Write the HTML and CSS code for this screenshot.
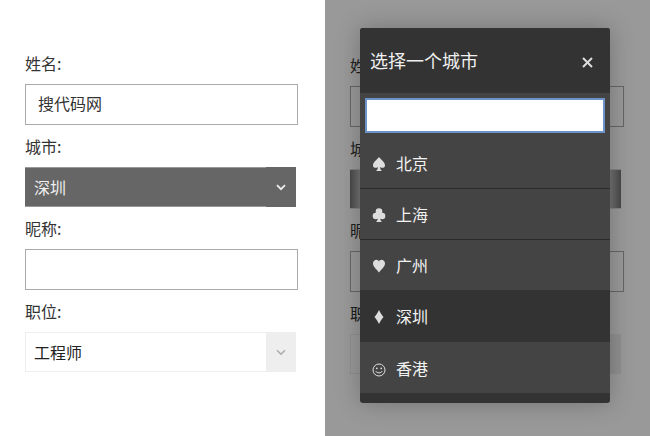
FILE: index.html
```html
<!DOCTYPE html>
<html lang="zh-CN">
<head>
    <meta charset="UTF-8">
    <meta name="viewport" content="width=device-width, initial-scale=1.0">
    <title>选择城市</title>
    <link rel="stylesheet" href="styles.css">
</head>
<body>
    <div class="page">
        <div class="pane">
            <form class="form">
                <label class="field-label">姓名:</label>
                <div class="text-box">搜代码网</div>
                <label class="field-label">城市:</label>
                <div class="select select-dark">
                    <span class="select-text">深圳</span>
                    <span class="select-arrow">
                        <svg width="10" height="7" viewBox="0 0 10 7"><path d="M1 1.2 5 5.2 9 1.2" fill="none" stroke="currentColor" stroke-width="1.8"/></svg>
                    </span>
                </div>
                <label class="field-label">昵称:</label>
                <div class="text-box"></div>
                <label class="field-label">职位:</label>
                <div class="select select-light">
                    <span class="select-text">工程师</span>
                    <span class="select-arrow">
                        <svg width="10" height="7" viewBox="0 0 10 7"><path d="M1 1.2 5 5.2 9 1.2" fill="none" stroke="currentColor" stroke-width="1.4"/></svg>
                    </span>
                </div>
            </form>
        </div>

        <div class="pane pane-open">
            <!-- same form behind the dialog, only its left edge shows -->
            <form class="form">
                <label class="field-label">姓</label>
                <div class="text-box"></div>
                <label class="field-label">城</label>
                <div class="select select-pressed"></div>
                <label class="field-label">昵</label>
                <div class="text-box"></div>
                <label class="field-label">职</label>
                <div class="select select-light">
                    <span class="select-text"></span>
                    <span class="select-arrow"></span>
                </div>
            </form>
            <div class="overlay"></div>
            <div class="dialog">
                <div class="dialog-head">
                    <span class="dialog-title">选择一个城市</span>
                    <span class="dialog-close">
                        <svg width="11" height="11" viewBox="0 0 11 11"><path d="M1 1 10 10M10 1 1 10" fill="none" stroke="currentColor" stroke-width="2"/></svg>
                    </span>
                </div>
                <div class="dialog-body">
                    <div class="search-wrap"><input class="search" type="text"></div>
                    <ul class="city-list">
                        <li class="city">
                            <svg class="city-icon" width="14" height="16" viewBox="0 0 14 16"><path d="M7 1C9 4 13 6 13 9.5 13 12 10 12.5 8 11 8.2 13 8.8 14.3 10 15H4C5.2 14.3 5.8 13 6 11 4 12.5 1 12 1 9.5 1 6 5 4 7 1Z" fill="currentColor"/></svg>
                            北京
                        </li>
                        <li class="city">
                            <svg class="city-icon" width="14" height="16" viewBox="0 0 14 16"><circle cx="7" cy="4.5" r="3.3" fill="currentColor"/><circle cx="3.9" cy="9" r="3.2" fill="currentColor"/><circle cx="10.1" cy="9" r="3.2" fill="currentColor"/><path d="M6 8C6 12 5.5 14 4 15H10C8.5 14 8 12 8 8Z" fill="currentColor"/></svg>
                            上海
                        </li>
                        <li class="city city-plain">
                            <svg class="city-icon" width="14" height="16" viewBox="0 0 14 16"><path d="M7 14.5C5 11.5 1 9 1 5.5 1 3 3 1.8 4.5 1.8 5.7 1.8 6.6 2.5 7 3.6 7.4 2.5 8.3 1.8 9.5 1.8 11 1.8 13 3 13 5.5 13 9 9 11.5 7 14.5Z" fill="currentColor"/></svg>
                            广州
                        </li>
                        <li class="city city-active">
                            <svg class="city-icon" width="14" height="16" viewBox="0 0 14 16"><path d="M7 1C8 3.5 10 6 11.5 8 10 10 8 12.5 7 15 6 12.5 4 10 2.5 8 4 6 6 3.5 7 1Z" fill="currentColor"/></svg>
                            深圳
                        </li>
                        <li class="city city-plain">
                            <svg class="city-icon" width="14" height="16" viewBox="0 0 14 16"><circle cx="7" cy="9" r="6" fill="none" stroke="currentColor"/><circle cx="4.8" cy="7.3" r="0.9" fill="currentColor"/><circle cx="9.2" cy="7.3" r="0.9" fill="currentColor"/><path d="M3.8 10.2C4.8 12.4 9.2 12.4 10.2 10.2" fill="none" stroke="currentColor"/></svg>
                            香港
                        </li>
                    </ul>
                </div>
            </div>
        </div>
    </div>
</body>
</html>
```

FILE: styles.css
```css
body {
    margin: 0;
    background-color: #fff;
    font-family: "Noto Sans CJK SC", "Liberation Sans", sans-serif;
    font-size: 16px;
    color: #333;
}

.page {
    display: flex;
    height: 436px;
    overflow: hidden;
}

.pane {
    position: relative;
    width: 325px;
    height: 436px;
    flex: none;
}

.form {
    display: flex;
    flex-direction: column;
    align-items: flex-start;
    padding: 53px 0 0 25px;
}

.pane-open .form {
    padding-top: 55px;
}

.field-label {
    height: 22px;
    line-height: 20px;
    margin-bottom: 9px;
    color: #333;
}

.text-box {
    box-sizing: border-box;
    width: 273px;
    height: 41px;
    line-height: 37px;
    padding-left: 12px;
    margin-bottom: 11px;
    border: 1px solid #aaa;
    color: #333;
}

.pane-open .text-box {
    width: 274px;
}

.select {
    box-sizing: border-box;
    display: flex;
    width: 271px;
    height: 40px;
    margin-bottom: 11px;
    line-height: 40px;
}

.select-text {
    flex: 1;
    padding-left: 9px;
}

.select-arrow {
    display: flex;
    align-items: center;
    justify-content: center;
    width: 30px;
}

.select-dark {
    background-color: #666;
    color: #eee;
}

.select-dark .select-text {
    border-top: 1px solid #999;
    border-bottom: 1px solid #999;
    line-height: 38px;
}

.select-light {
    color: #222;
}

.select-light .select-text {
    border-top: 1px solid #eee;
    border-bottom: 1px solid #eee;
    border-left: 1px solid #eee;
    padding-left: 8px;
    line-height: 38px;
}

.select-light .select-arrow {
    background-color: #eee;
    color: #aaa;
}

.select-pressed {
    background: linear-gradient(to right, #777 0, #d0d0d0 12px, #d0d0d0 258px, #777 271px);
    border-top: 1px solid #ddd;
    border-bottom: 1px solid #ddd;
}

.overlay {
    position: absolute;
    top: 0;
    left: 0;
    right: 0;
    bottom: 0;
    background-color: rgba(0, 0, 0, 0.4);
}

.dialog {
    position: absolute;
    top: 28px;
    left: 35px;
    width: 250px;
    height: 375px;
    display: flex;
    flex-direction: column;
    border-radius: 3px;
    background-color: #333;
    box-shadow: 0 0 24px rgba(0, 0, 0, 0.25);
    overflow: hidden;
}

.dialog-head {
    display: flex;
    align-items: center;
    justify-content: space-between;
    box-sizing: border-box;
    height: 65px;
    flex: none;
    padding: 0 17px 2px 10px;
    background-color: #333;
    color: #eee;
}

.dialog-title {
    font-size: 18px;
    color: #f0f0f0;
}

.dialog-close {
    display: flex;
    margin-top: 6px;
    color: #ddd;
}

.dialog-body {
    background-color: #444;
}

.search-wrap {
    padding: 5px 5px 0;
}

.search {
    box-sizing: border-box;
    display: block;
    width: 240px;
    height: 35px;
    margin: 0;
    padding: 0;
    border: 2px solid #6d94c8;
    background-color: #fff;
    outline: none;
}

.city-list {
    list-style-type: none;
    margin: 5px 0 0;
    padding: 0;
}

.city {
    display: flex;
    align-items: center;
    box-sizing: border-box;
    height: 51px;
    padding-left: 12px;
    border-bottom: 1px solid #2b2b2b;
    color: #f2f2f2;
}

.city-icon {
    flex: none;
    margin-right: 10px;
    margin-top: 2px;
    color: #ddd;
}

.city-plain {
    border-bottom: none;
}

.city-plain:nth-child(3) {
    height: 50px;
}

.city-active {
    background-color: #333;
    border-bottom: none;
    height: 52px;
}
```
